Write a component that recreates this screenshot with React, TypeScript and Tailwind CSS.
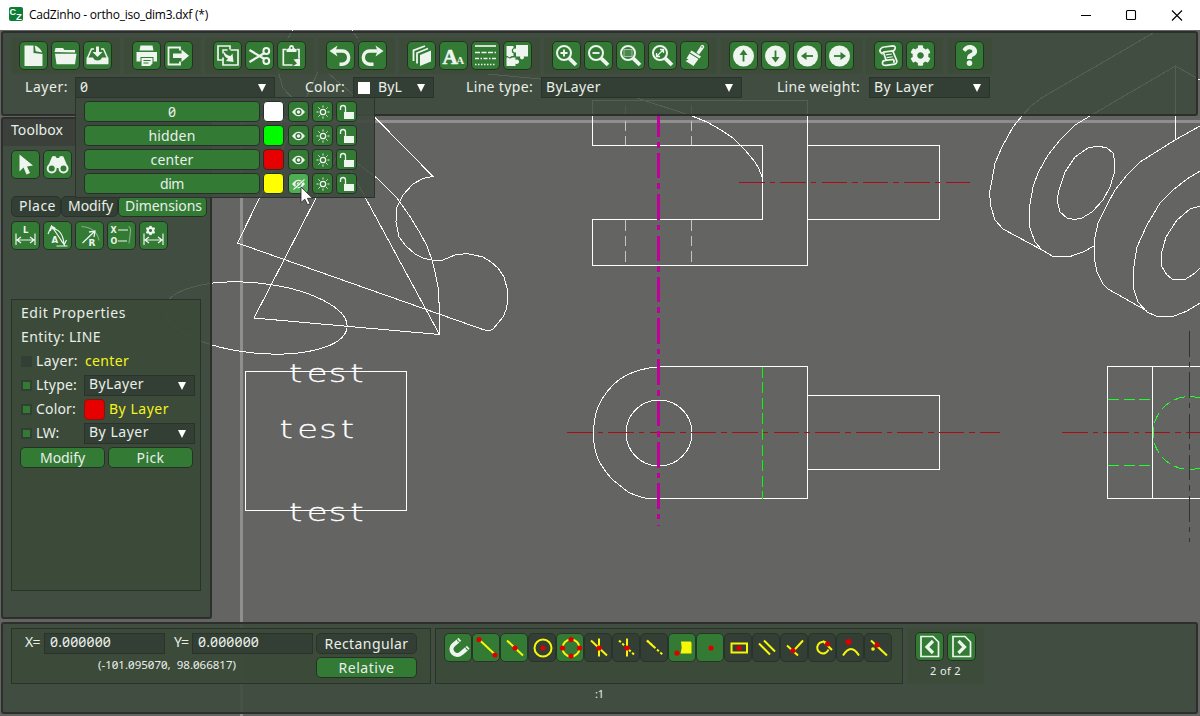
import React, { useLayoutEffect, useRef, useState } from "react";
import { FaCog, FaQuestion } from "react-icons/fa";

type FitProps = { w: number; children: string; className?: string };

/* Single-line label whose tracking is tuned so that it takes exactly `w` pixels. */
function Fit({ w, children, className = "" }: FitProps) {
  const ref = useRef<HTMLSpanElement>(null);
  const [ls, setLs] = useState(0);
  useLayoutEffect(() => {
    if (ref.current) {
      const natural = ref.current.getBoundingClientRect().width;
      setLs((w - natural) / children.length);
    }
  }, []);
  return (
    <span ref={ref} className={`inline-block whitespace-pre ${className}`} style={{ letterSpacing: ls }}>
      {children}
    </span>
  );
}

const W = "#eef4ee";
const G = "#337a35";

type IconName =
  | "new" | "open" | "save" | "print" | "exit" | "copy" | "cut" | "paste" | "undo" | "redo"
  | "layers" | "fonts" | "ltypes" | "blocks" | "zoomIn" | "zoomOut" | "zoomWin" | "zoomAll" | "brush"
  | "up" | "down" | "left" | "right" | "script" | "gear" | "help" | "pointer" | "find"
  | "dimL" | "dimA" | "dimR" | "dimO" | "dimCfg" | "prev" | "next";

const lens = (
  <>
    <circle cx="12.500" cy="12.500" r="7" fill="none" stroke={W} strokeWidth="2" />
    <path d="M17.800 17.800l6.700 6.700" stroke={W} strokeWidth="3.800" />
  </>
);

const arrowDisc = (angle: number) => (
  <>
    <circle cx="15" cy="15.500" r="10.500" fill={W} />
    <g transform={`rotate(${angle} 15 15.500)`}>
      <path d="M15 21V11.500" stroke={G} strokeWidth="1.800" />
      <path d="M11 14.500L15 9l4 5.500z" fill={G} />
    </g>
  </>
);

const dimArrow = (
  <path d="M5.500 13v11.500M24.500 13v11.500M6.500 19.500h17M10.500 16.500L6.500 19.500l4 3M19.500 16.500l4 3-4 3" fill="none" stroke={W} strokeWidth="1.200" />
);

const icons: Record<IconName, React.ReactNode> = {
  new: <path d="M6 5h9v7.500l9 1V25.500H6zM16.200 5q5 1.500 7.500 7l-6.500-1.200z" fill={W} />,
  open: <path d="M4 11.500L5 7.500h7.500L14 9.500h10.500v2.500zM4.500 13.200H26L24.500 23.800H6z" fill={W} />,
  save: (
    <>
      <path d="M4 17h6.500q1 3 4.500 3t4.500-3H26v6.800H4z" fill={W} />
      <path d="M5 17.500L9 8.500h2.500M25 17.500L21 8.500h-2.500" fill="none" stroke={W} strokeWidth="1.500" />
      <path d="M13.500 6h3v5.500H20L15 16.500l-5-5h3.500z" fill={W} />
    </>
  ),
  print: (
    <>
      <path d="M9 5h12l1 5H8zM5 11.500h20.500V21h-3.500v-4.500H9V21H5zM10 17.500h11V23l-2.500 2.500H10z" fill={W} />
      <path d="M12 20h7M12 22.500h5" stroke={G} />
    </>
  ),
  exit: (
    <>
      <path d="M16.500 10V7H5v17h11.500v-3" fill="none" stroke={W} strokeWidth="1.800" />
      <path d="M9.500 13H18V9l7.500 6.300L18 21.500v-4H9.500z" fill={W} />
    </>
  ),
  copy: (
    <>
      <path d="M17.500 9V5.500H5.500V19.500H10" fill="none" stroke={W} strokeWidth="1.700" />
      <path d="M10.500 17v7.500H25.500V9.500H18" fill="none" stroke={W} strokeWidth="1.700" />
      <path d="M10.500 13V9.500H15" fill="none" stroke={W} strokeWidth="1.500" />
      <path d="M11 10.500q2.500 4.500 7 5l2-2.500 1 8.500-7.500-1 2-2.500q-4.500-1.500-4.500-7.500z" fill={W} />
    </>
  ),
  cut: (
    <>
      <path d="M5 9.500L20 18.500M5 21.500l15-9" stroke={W} strokeWidth="2.200" />
      <circle cx="21.800" cy="10.500" r="2.900" fill="none" stroke={W} strokeWidth="2" />
      <circle cx="21.800" cy="20.500" r="2.900" fill="none" stroke={W} strokeWidth="2" />
    </>
  ),
  paste: (
    <>
      <path d="M10 9H6.800v15.500H16M20 9h2.500v9" fill="none" stroke={W} strokeWidth="1.700" />
      <path d="M10 11.500V9l2.500-1.500Q12.500 4.500 15 4.500t2.500 3L20 9v2.500z" fill={W} />
      <circle cx="15" cy="7.500" r="1" fill={G} />
      <path d="M17 19l6.500-1v7.500H16.500l4-2.500z" fill={W} />
    </>
  ),
  undo: (
    <>
      <path d="M9 10.500h8a6.200 6.600 0 0 1 0 13.200h-3" fill="none" stroke={W} strokeWidth="3.400" />
      <path d="M4 10.500L12 5l-2 5.500 2 5.500z" fill={W} />
    </>
  ),
  redo: (
    <>
      <path d="M20 10.500h-8a6.200 6.600 0 0 0 0 13.200h4" fill="none" stroke={W} strokeWidth="3.400" />
      <path d="M26 10.500L18 5l2 5.500-2 5.500z" fill={W} />
    </>
  ),
  layers: (
    <>
      <path d="M13.500 14.500L24.500 10v11l-11 4.500z" fill={W} />
      <path d="M10.500 23V12.500L21.500 8M7 20.500V9.800L18.500 5.500" fill="none" stroke={W} strokeWidth="1.800" />
    </>
  ),
  fonts: (
    <>
      <text x="4" y="23.500" fontSize="21" fontWeight="700" fontFamily="Liberation Serif, serif" fill={W} stroke={W} strokeWidth=".6">A</text>
      <text x="17.800" y="23.500" fontSize="11" fontWeight="700" fontFamily="Liberation Serif, serif" fill={W}>A</text>
    </>
  ),
  ltypes: (
    <g stroke={W} strokeWidth="1.700">
      <path d="M4.500 5.500h21" />
      <path d="M4.500 12h21" strokeDasharray="5 1.500" />
      <path d="M4.500 18h21" strokeDasharray="4 1.500 1.500 1.500" />
      <path d="M4.500 24h21" strokeDasharray="1.500 1.500" />
    </g>
  ),
  blocks: (
    <>
      <path d="M13.500 4.500H25.500V16h-4.200a2 2 0 1 1-3.600 0H13.500v-4.200a2 2 0 1 1 0-3.500z" fill={W} />
      <path d="M4 5.500h7v2a3 3 0 0 0 0 5.500v2.500H9a2.300 2.300 0 0 1-4 0H4z" fill={W} />
      <path d="M4 17h1.500a3 3 0 0 0 4 0h3.500v2.500a2.200 2.200 0 1 1 0 3.500v2.500H4z" fill={W} />
    </>
  ),
  zoomIn: <>{lens}<path d="M12.500 9v7M9 12.500h7" stroke={W} strokeWidth="1.900" /></>,
  zoomOut: <>{lens}<path d="M9 12.500h7" stroke={W} strokeWidth="1.900" /></>,
  zoomWin: <>{lens}<rect x="8.500" y="9" width="8" height="7" fill="#4b874e" stroke="#9fbf9f" /></>,
  zoomAll: <>{lens}<path d="M9.500 15.500l6-6M9 12.500V16h3.500M12.500 9H16v3.500" fill="none" stroke={W} strokeWidth="1.300" /></>,
  brush: (
    <>
      <path d="M17 12l4.500-7q1.500-1.500 2.800 0t-.3 3L19.500 14" fill={W} />
      <circle cx="22.500" cy="6.500" r=".8" fill={G} />
      <path d="M12 10l9.500 6-1.500 2-9.500-6zM10 13l9 5.500L14 25.500 6 20.500l3-1.500-2-1z" fill={W} />
    </>
  ),
  up: arrowDisc(0),
  down: arrowDisc(180),
  left: arrowDisc(-90),
  right: arrowDisc(90),
  script: (
    <g transform="rotate(-8 15 15)">
      <path d="M8.500 12Q6 9.500 8 7.500t4-1.500h8.500q3 .5 2 3t-3 2H10.500q-2 .5-2 1zM10.500 11.500L12 19.500M20 11.500l2 8q1.500 4-2 5H11q-3.500-.5-3-3t3.500-2H19q1.500 1.500 0 3.500" fill="none" stroke={W} strokeWidth="1.700" />
      <path d="M12.500 14h6M13 16.800h6" stroke={W} strokeWidth="1.200" />
    </g>
  ),
  gear: <FaCog x="4.500" y="4.500" size={21} color={W} />,
  help: <FaQuestion x="4.500" y="4.500" size={21} color={W} />,
  pointer: <path d="M9 5v17l4-4 3 7 3.500-1.500L16.500 17l6-1z" fill={W} />,
  find: (
    <>
      <path d="M9 8.500Q9 6.500 11.500 6.500T14 8.500h2.500q0-2 2.500-2t2.500 2L25.500 18H5z" fill={W} />
      <circle cx="9.200" cy="19" r="4" fill={G} stroke={W} strokeWidth="2" />
      <circle cx="21" cy="19" r="4" fill={G} stroke={W} strokeWidth="2" />
      <path d="M13.800 17.500h2.700" stroke={W} strokeWidth="2" />
    </>
  ),
  dimL: <>{dimArrow}<text x="12.500" y="12" fontSize="8.500" fontWeight="700" fontFamily="DejaVu Sans, sans-serif" fill={W}>L</text></>,
  dimA: (
    <>
      <path d="M5.500 13.500L9 5.500l13.500 20M14 25.500h11M8.500 8Q20 8 21.500 23.500M9 5.500l4 2.500M9 5.500l-1 5M21.500 24l-3-4M21.800 24l2.200-4.500" fill="none" stroke={W} strokeWidth="1.200" />
      <text x="9" y="22" fontSize="8.500" fontWeight="700" fontFamily="DejaVu Sans, sans-serif" fill={W}>A</text>
    </>
  ),
  dimR: (
    <>
      <path d="M7 6q15 1 17.500 14" fill="none" stroke="#83ad83" strokeWidth="1.200" />
      <path d="M8 22.500L20.500 10.500M14.500 11.500l6-1-1 6" fill="none" stroke={W} strokeWidth="1.300" />
      <text x="14" y="25.500" fontSize="9" fontWeight="700" fontFamily="DejaVu Sans, sans-serif" fill={W}>R</text>
    </>
  ),
  dimO: (
    <>
      <text x="4" y="12" fontSize="8" fontWeight="700" fontFamily="DejaVu Sans, sans-serif" fill={W}>X</text>
      <text x="4" y="23.500" fontSize="8" fontWeight="700" fontFamily="DejaVu Sans, sans-serif" fill={W}>O</text>
      <path d="M11.500 9.500h10M11.500 20.500h9" stroke={W} strokeWidth="1.200" />
      <path d="M22 6q2.500 1 2 5l-1.500 12" fill="none" stroke="#83ad83" strokeWidth="1.200" />
    </>
  ),
  dimCfg: <>{dimArrow}<FaCog x="7" y="5" size={10} color={W} /></>,
  prev: <><path d="M6.500 5h12l5.500 5.500V25H6.500z" fill="none" stroke={W} strokeWidth="1.700" /><path d="M18.500 9.500L12.500 15.500l6 6" fill="none" stroke={W} strokeWidth="3.200" /></>,
  next: <><path d="M6.500 5h12l5.500 5.500V25H6.500z" fill="none" stroke={W} strokeWidth="1.700" /><path d="M12 9.500L18 15.500l-6 6" fill="none" stroke={W} strokeWidth="3.200" /></>,
};

function IconButton({ name }: { name: IconName }) {
  return (
    <button className="h-[29px] w-[29px] shrink-0 rounded-[5px] border border-[#243226] bg-[#337a35]">
      <svg viewBox="0.500 0.500 29 29" className="-m-px block h-[29px] w-[29px]">{icons[name]}</svg>
    </button>
  );
}

const groups: IconName[][] = [
  ["new", "open", "save"],
  ["print", "exit"],
  ["copy", "cut", "paste"],
  ["undo", "redo"],
  ["layers", "fonts", "ltypes", "blocks"],
  ["zoomIn", "zoomOut", "zoomWin", "zoomAll", "brush"],
  ["up", "down", "left", "right"],
  ["script", "gear"],
  ["help"],
];

function Combo({ className, children, swatch, textWidth }: { className: string; children: string; swatch?: boolean; textWidth: number }) {
  return (
    <div className={`relative flex h-[21px] shrink-0 items-center border border-[#2a332b] bg-[#333f34] pl-[4px] ${className}`}>
      {swatch && <span className="mr-[8px] h-3 w-3 bg-white" />}
      <Fit w={textWidth} className="-mt-[2px]">{children}</Fit>
      <svg viewBox="0 0 8 8" className="absolute right-[8px] top-[6px] h-2 w-2"><path d="M0 0h8L4 8z" fill="#fff" /></svg>
    </div>
  );
}

function LayerRow({ name, w, color, hidden }: { name: string; w: number; color: string; hidden?: boolean }) {
  const small = "h-[21px] w-[21px] shrink-0 rounded-[4px] border border-[#243226]";
  return (
    <div className="flex h-6 gap-[3px]">
      <div className="flex h-[21px] w-[176px] items-center justify-center rounded-[4px] border border-[#243226] bg-[#337a35]">
        <Fit w={w}>{name}</Fit>
      </div>
      <div className={`${small} ${color}`} />
      <div className={`${small} ml-px ${hidden ? "bg-[#4fae53]" : "bg-[#337a35]"}`}>
        <svg viewBox="0 0 21 21" className="-m-px h-[21px] w-[21px]">
          <path d="M4 11q6.500-8.500 13 0-6.500 8.500-13 0z" fill={W} />
          <circle cx="10.500" cy="11" r="2.400" fill={W} stroke={hidden ? "#4fae53" : G} strokeWidth="1.400" />
          {hidden && <path d="M5 16L16 6M6.500 17L17 7" stroke="#4fae53" strokeWidth="1" />}
          {hidden && <path d="M5.500 16.500l11-10" stroke={W} strokeWidth="1.100" />}
        </svg>
      </div>
      <div className={`${small} bg-[#337a35]`}>
        <svg viewBox="0 0 21 21" className="-m-px h-[21px] w-[21px]" stroke={W} fill="none">
          <circle cx="11" cy="11" r="2.700" strokeWidth="1.300" />
          <path d="M11 4.500v2M11 15.500v2M4.500 11h2M15.500 11h2M6.400 6.400l1.400 1.400M14.200 14.200l1.400 1.400M6.400 15.600l1.400-1.400M14.200 7.800l1.400-1.400" />
        </svg>
      </div>
      <div className={`${small} bg-[#337a35]`}>
        <svg viewBox="0 0 21 21" className="-m-px h-[21px] w-[21px]">
          <rect x="8" y="11" width="10" height="7" fill={W} />
          <path d="M4.500 9V7q0-2.500 2.500-2.500T9.500 7v4" fill="none" stroke={W} strokeWidth="1.300" />
        </svg>
      </div>
    </div>
  );
}

function Drawing() {
  const center = "25.500 5 5.600 5.200";
  return (
    <svg viewBox="0 0 1200 716" className="absolute inset-0 h-[716px] w-[1200px]" fill="none" stroke="#fff" strokeWidth="1" shapeRendering="crispEdges">
      <path d="M241.500 120V716M240 121.500H1200" stroke="#8f8f8f" strokeWidth="3" />
      <path d="M293 30L287 40Q276 55 279 74L283 88 295 101M352 30L358 39 372 60M328 73L350 92 433 176.500 423 178.500 413 184 403 195 396.500 208 396 222 399 237 406 246 415 254 424 258.500 432 260 443 260 455 255 467 253.500 483 257 491 262 498 268 504 277 507.500 290 507.500 302 506 310 503 317 498 323 493 329 489 331 483 329.500 237.500 243 260 197 318 72" />
      <path d="M316 198L254 318 439.500 334.500 365 197 340 150 316 198M439.500 334.500V310L438 287 435 272 432 260 427 246 420 233 410 216.500 397 198 377 178 358 164 340 150" />
      <ellipse cx="256" cy="318" rx="91.500" ry="35" transform="rotate(6 256 318)" />
      <rect x="245.500" y="371.500" width="161" height="139" />
      <path d="M592.500 100.500V145.500H762.500V219.500H592.500V265.500H807.500V100.500zM807.500 145.500H939.500V219.500H807.500" />
      <path d="M488 74L540 79 637 98 692 116 707 122 721 130 733 138 745 150 755 162 759 169 762.500 178" />
      <path d="M625.500 105V145M691.500 105V145M625.500 220V265M691.500 220V265" stroke="#c4c4c4" strokeDasharray="10.800 4.700" />
      <path d="M659 366.500H807.500V498.500H647Q636 496 628 492L613 480Q604 471 598 459 593 447 593.500 432 594 412 602 399 612 383 625 376 640 368 659 367M807.500 395.500H939.500V469.500H807.500" />
      <circle cx="659" cy="433" r="33" />
      <path d="M739 182.500H970M567 432.500H1000M1062 432.500H1200" stroke="#a80e16" strokeDasharray={center} />
      <path d="M762.500 366.500V498.500" stroke="#0f0" strokeWidth="1.500" strokeDasharray="11 4.600" />
      <path d="M658.500 111.600V526" stroke="#c0009b" strokeWidth="3" strokeDasharray={center} />
      <path d="M1155 32L1043 97 1032 105 1022 116 1013 127 1002 147 995 163 992 180 989.500 193 991 207 995 220 1003 229 1042 250" />
      <path d="M1200 80L1175.500 66 1090 116 1075 125 1060 140 1048 155 1038 173 1033 187 1029.500 207 1030 228 1035 242 1042 250 1053 256.500H1070L1083 252 1094 246M1175.500 66V139" />
      <path d="M1088 148L1098 146 1107 148 1113 153 1114.500 160V172L1110 187 1103 200 1092 212 1082 218 1075 219.500 1067 218 1060 212 1057 200 1059 190 1065 172 1075 157z" />
      <path d="M1200 126L1175 140 1140 162 1127 175 1115 190 1107 205 1098 223 1095 237 1094 257 1097 272 1103 284 1108 289 1147 311" />
      <path d="M1200 171L1187 179 1173 190 1160 203 1147 225 1137 247 1133 272 1134 290 1138 302 1147 312 1157 316.500H1173L1187 311 1200 303" />
      <path d="M1200 206L1190 209 1177 220 1166 237 1161.500 253 1162 267 1167 275 1173 279.500H1185L1195 273 1200 268" />
      <path d="M1200 366.500H1107.500V498.500H1200M1152.500 366.500V498.500" />
      <path d="M1108 399.500H1152" stroke="#1fff2a" strokeDasharray="11 4.600" />
      <path d="M1108 465.500H1152" stroke="#1fff2a" strokeDasharray="11 4.600" />
      <circle cx="1189.500" cy="433" r="36.500" stroke="#1fff2a" strokeDasharray="11 4.600" />
      <path d="M1189.500 331V542" stroke="#333" strokeDasharray={center} />
      <g fill="#fff" stroke="#fff" strokeWidth=".25" fontFamily="DejaVu Sans, sans-serif" fontWeight="200" fontSize="25" shapeRendering="auto">
        <text transform="translate(289 382) scale(1.350 1)" x="0 13.200 29.400 45.400">test</text>
        <text transform="translate(279.500 438) scale(1.350 1)" x="0 13.200 29.400 45.400">test</text>
        <text transform="translate(289 521) scale(1.350 1)" x="0 13.200 29.400 45.400">test</text>
      </g>
    </svg>
  );
}

const Y = "#f7f70a";
const R = "#d00";
const dot = (x: number, y: number, r = 2.6) => <circle cx={x} cy={y} r={r} fill={R} stroke="none" />;
const snaps: { on?: boolean; art: React.ReactNode }[] = [
  { on: true, art: <><path d="M14 8.500L9.300 12.500A5.700 5.700 0 0 0 17.300 20.800L22.500 16.300" stroke={W} strokeWidth="4.200" /><path d="M13.500 8.800l1.500-1.500M22 16.700l1.500-1.500" stroke={G} strokeWidth="1.400" /><path d="M14.500 8l1.300-1.200M23 15.900l1.300-1.200" stroke={W} strokeWidth="4" /></> },
  { on: true, art: <><path d="M7 7L23 22" />{dot(7, 7)}{dot(23, 22.500)}</> },
  { on: true, art: <><path d="M7 8L23 23" />{dot(15, 15.500)}</> },
  { art: <><circle cx="15" cy="15.500" r="8.500" />{dot(15, 15.500)}</> },
  { on: true, art: <><circle cx="15" cy="15.500" r="8.500" />{dot(15, 7)}{dot(15, 23.500)}{dot(6.500, 15.500)}{dot(23.500, 15.500)}</> },
  { art: <><path d="M7 8L23 23M15 6V24" />{dot(15, 15.500)}</> },
  { art: <><path d="M15 6V24" /><path d="M7 8l16 15" strokeDasharray="2.500 2" />{dot(15, 15.500)}</> },
  { art: <><path d="M7 8l7 6.500" /><path d="M7 8l16.500 15" strokeDasharray="2.500 2" /></> },
  { on: true, art: <><path d="M13 9h9q2 0 1.500 4v8H12.500q2-6 .5-12z" fill={Y} stroke="none" />{dot(9, 20.500)}</> },
  { on: true, art: dot(15, 15.500) },
  { art: <><rect x="7.500" y="11" width="15.500" height="9" />{dot(15, 15.500)}</> },
  { art: <path d="M7 11l11 11M12 8l11 11" /> },
  { art: <><path d="M7 13l11 10M12 20L23 8" />{dot(13, 18)}</> },
  { art: <><path d="M18.500 10.500A5.800 5.800 0 1 0 20.500 17M15 8.500l9 9" />{dot(19.500, 11.500)}</> },
  { art: <><path d="M7 23q8-13 16 0" />{dot(12.500, 9.500, 3)}</> },
  { art: <><path d="M7 8L23 23" /><circle cx="9" cy="16.500" r="1.800" fill={Y} stroke="none" />{dot(13, 12.500)}</> },
];

const panel = "rounded-[3px] border-2 border-[#2c2f2c] bg-[#3c4a3c]/88";
const greenBtn = "flex h-[21px] items-center justify-center rounded-[5px] border border-[#243226] bg-[#337a35]";
const darkBtn = "flex h-[21px] items-center justify-center rounded-[5px] border border-[#2a332b] bg-[#333f34]";

function Check({ on }: { on?: boolean }) {
  return <span className="mr-[4px] flex h-[11px] w-[11px] items-center justify-center bg-[#323f34]">{on && <span className="h-[7px] w-[7px] bg-[#337a35]" />}</span>;
}

export default function App() {
  return (
    <div className="relative h-[716px] w-[1200px] overflow-hidden bg-[#646462] font-['Noto_Sans',sans-serif] text-[14px] leading-5 text-[#e9efe9] [font-feature-settings:'zero']">
      <Drawing />
      <div className="relative flex h-full flex-col">
        <header className="flex h-[30px] shrink-0 items-center bg-white pl-[9px] text-black">
          <svg viewBox="0 0 14 14" className="-mt-[2px] mr-[6px] h-[14px] w-[14px]">
            <rect width="14" height="14" rx="2" fill="#0b7d35" />
            <text x="0.500" y="7.800" fontSize="9" fontWeight="700" fontFamily="Liberation Sans, sans-serif" fill="#fff">C</text>
            <text x="7" y="12.500" fontSize="9.500" fontWeight="700" fontFamily="Liberation Sans, sans-serif" fill="#fff">Z</text>
          </svg>
          <Fit w={179} className="font-['Open_Sans',sans-serif] text-[12px] leading-[28px]">CadZinho - ortho_iso_dim3.dxf (*)</Fit>
          <svg viewBox="0 0 110 14" className="ml-auto mr-[12px] h-[14px] w-[110px]" fill="none" stroke="#000" strokeWidth="1.100">
            <path d="M3 7.500h10M94 2.500l10 10M104 2.500l-10 10" />
            <rect x="48.500" y="2.500" width="9" height="9" rx="1" />
          </svg>
        </header>

        <section className={`relative z-10 ml-px mt-px h-[85px] w-[1197px] shrink-0 ${panel}`}>
          <div className="flex gap-[4px] pl-[8px] pt-[5px]">
            {groups.map((g, i) => (
              <div key={i} className="flex h-9 gap-[3px] bg-[#3c4a36]/70 px-[8px] pt-[3px]">
                {g.map((n) => <IconButton key={n} name={n} />)}
              </div>
            ))}
          </div>
          <div className="flex items-center pl-[22px] pt-[3px]">
            <div className="-mt-[2px] w-[50px]"><Fit w={43}>Layer:</Fit></div>
            <div className="relative">
              <Combo className="w-[200px]" textWidth={8}>0</Combo>
              <div className="absolute left-0 top-[20px] h-[101px] w-[300px] border border-[#2c322c] bg-[#3f4a3f]/92 pl-[8px] pt-[3px]">
                <LayerRow name="0" w={8} color="bg-white" />
                <LayerRow name="hidden" w={47} color="bg-[#00fb00]" />
                <LayerRow name="center" w={43} color="bg-[#e60000]" />
                <LayerRow name="dim" w={24} color="bg-[#ffff00]" hidden />
                <svg viewBox="0 0 14 20" className="absolute left-[224px] top-[88px] h-5 w-[14px]">
                  <path d="M1 1v15.500l3.800-3.300 2.700 5.600 2.600-1.200-2.700-5.300H12.500z" fill="#fff" stroke="#222" strokeWidth=".8" />
                </svg>
              </div>
            </div>
            <div className="-mt-[2px] ml-[30px] w-[48px]"><Fit w={40}>Color:</Fit></div>
            <Combo className="w-[81px]" swatch textWidth={24}>ByL</Combo>
            <div className="-mt-[2px] ml-[32px] w-[75px]"><Fit w={67}>Line type:</Fit></div>
            <Combo className="w-[201px]" textWidth={55}>ByLayer</Combo>
            <div className="-mt-[2px] ml-[35px] w-[92px]"><Fit w={83}>Line weight:</Fit></div>
            <Combo className="w-[121px]" textWidth={60}>By Layer</Combo>
          </div>
        </section>

        <aside className={`ml-px mt-px h-[502px] w-[211px] shrink-0 ${panel}`}>
          <div className="h-[27px] bg-[#3b403b] pl-[8px] pt-px"><Fit w={52}>Toolbox</Fit></div>
          <div className="flex gap-[3px] pl-[8px] pt-[4px]">
            <IconButton name="pointer" />
            <IconButton name="find" />
          </div>
          <div className="mt-[17px] flex pl-[8px]">
            <div className={`w-[50px] pl-[3px] ${darkBtn}`}><Fit w={37} className="-mt-px">Place</Fit></div>
            <div className={`w-[57px] pl-[2px] ${darkBtn}`}><Fit w={45} className="-mt-px">Modify</Fit></div>
            <div className={`w-[89px] pl-[2px] ${greenBtn}`}><Fit w={77} className="-mt-px">Dimensions</Fit></div>
          </div>
          <div className="mt-[4px] flex gap-[3px] pl-[8px]">
            {(["dimL", "dimA", "dimR", "dimO", "dimCfg"] as IconName[]).map((n) => <IconButton key={n} name={n} />)}
          </div>
          <div className="ml-[8px] mt-[49px] h-[292px] w-[190px] border border-[#2a332b] bg-[#3c4a38]/90 pl-[9px] pt-[3px]">
            <div className="flex h-6 items-start"><Fit w={105}>Edit Properties</Fit></div>
            <div className="flex h-6 items-start"><Fit w={80}>Entity: LINE</Fit></div>
            <div className="flex h-5 items-center"><Check /><div className="w-[49px]"><Fit w={42}>Layer:</Fit></div><Fit w={44} className="text-[#f4f41c]">center</Fit></div>
            <div className="mt-[4px] flex h-5 items-center"><Check on /><div className="w-[48px]"><Fit w={41}>Ltype:</Fit></div><Combo className="w-[111px]" textWidth={55}>ByLayer</Combo></div>
            <div className="mt-[4px] flex h-5 items-center"><Check on /><div className="w-[48px]"><Fit w={40}>Color:</Fit></div><span className="mr-[4px] h-[21px] w-[21px] rounded-[4px] border border-[#7c1714] bg-[#e60000]" /><Fit w={60} className="text-[#f4f41c]">By Layer</Fit></div>
            <div className="mt-[4px] flex h-5 items-center"><Check on /><div className="w-[48px]"><Fit w={23}>LW:</Fit></div><Combo className="w-[111px]" textWidth={60}>By Layer</Combo></div>
            <div className="-ml-px mt-[4px] flex gap-[3px]">
              <div className={`w-[85px] ${greenBtn}`}><Fit w={45}>Modify</Fit></div>
              <div className={`w-[85px] ${greenBtn}`}><Fit w={28}>Pick</Fit></div>
            </div>
          </div>
        </aside>

        <footer className={`ml-px mt-[3px] h-[92px] w-[1197px] shrink-0 ${panel}`}>
          <div className="flex pl-[8px] pt-[4px]">
            <div className="h-[56px] w-[420px] border border-[#2a332b] bg-[#3c4a38]/90 pl-[13px] pt-[4px]">
              <div className="flex items-center">
                <div className="-mt-[3px] w-[19px]"><Fit w={15}>X=</Fit></div>
                <div className="flex h-[21px] w-[121px] items-center border border-[#2a332b] bg-[#333f34] pl-[5px]"><Fit w={61} className="-mt-[3px]">0.000000</Fit></div>
                <div className="-mt-[3px] ml-[9px] w-[18px]"><Fit w={14}>Y=</Fit></div>
                <div className="flex h-[21px] w-[121px] items-center border border-[#2a332b] bg-[#333f34] pl-[5px]"><Fit w={61} className="-mt-[3px]">0.000000</Fit></div>
                <div className={`ml-[3px] w-[101px] ${darkBtn}`}><Fit w={84}>Rectangular</Fit></div>
              </div>
              <div className="mt-[3px] flex justify-between pl-[73px]">
                <Fit w={138} className="-mt-[2px] text-[11.500px]">(-101.095070,  98.066817)</Fit>
                <div className={`mr-[13px] w-[101px] ${greenBtn}`}><Fit w={56}>Relative</Fit></div>
              </div>
            </div>
            <div className="ml-[4px] flex h-[56px] w-[468px] border border-[#2a332b] bg-[#3c4a38]/90 pl-[8px] pt-[4px]">
              {snaps.map((s, i) => (
                <div key={i} className={`h-[29px] w-[28px] shrink-0 rounded-[5px] border border-[#283329] ${s.on ? "bg-[#337a35]" : "bg-[#333f34]"}`}>
                  <svg viewBox="0 0.500 28 28" className="-m-px h-[28px] w-[28px]" fill="none" stroke={Y} strokeWidth="2">{s.art}</svg>
                </div>
              ))}
            </div>
            <div className="ml-[4px] flex h-[56px] w-[77px] flex-col items-center bg-[#3c4a38]/70 pt-[4px]">
              <div className="flex gap-[3px]"><IconButton name="prev" /><IconButton name="next" /></div>
              <Fit w={31} className="text-[11px]">2 of 2</Fit>
            </div>
          </div>
          <div className="text-center text-[11px]">:1</div>
        </footer>
      </div>
    </div>
  );
}
